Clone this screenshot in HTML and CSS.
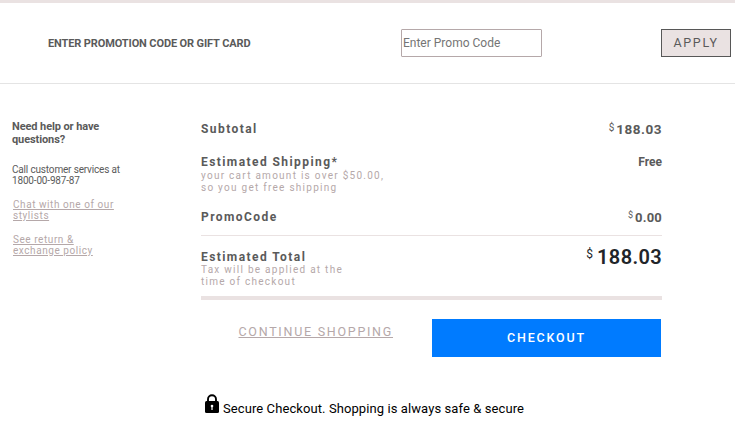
FILE: index.html
```html
<!DOCTYPE html>
<html lang="en">
<head>
<meta charset="utf-8">
<title>Cart summary</title>
<link rel="stylesheet" href="styles.css">
</head>
<body>
<div class="cart">
  <form class="promo">
    <label class="promo-label" for="code">ENTER PROMOTION CODE OR GIFT CARD</label>
    <input class="promo-input" id="code" type="text" placeholder="Enter Promo Code">
    <button class="apply" type="button">APPLY</button>
  </form>
  <div class="details">
    <aside class="help">
      <h2>Need help or have<br>questions?</h2>
      <p>Call customer services at<br>1800-00-987-87</p>
      <a href="#">Chat with one of our<br>stylists</a>
      <a href="#">See return &amp;<br>exchange policy</a>
    </aside>
    <main class="summary">
      <div class="row subtotal">
        <span class="name">Subtotal</span>
        <span class="price"><span class="cur">$</span><b>188.03</b></span>
      </div>
      <div class="row shipping">
        <div><span class="name">Estimated Shipping*</span>
          <p class="note">your cart amount is over $50.00,<br>so you get free shipping</p></div>
        <span class="free">Free</span>
      </div>
      <div class="row code">
        <span class="name">PromoCode</span>
        <span class="price small"><span class="cur">$</span><b>0.00</b></span>
      </div>
      <div class="row total">
        <div><span class="name">Estimated Total</span>
          <p class="note">Tax will be applied at the<br>time of checkout</p></div>
        <span class="price big"><span class="cur">$</span><b>188.03</b></span>
      </div>
      <div class="actions">
        <a class="continue" href="#">CONTINUE SHOPPING</a>
        <button class="checkout" type="button">CHECKOUT</button>
      </div>
      <div class="secure">
        <svg class="lock" viewBox="0 0 14 19" width="14" height="19">
          <path d="M3 8V5.2a4 4 0 0 1 8 0V8" fill="none" stroke="#000" stroke-width="1.9"/>
          <rect x="0" y="7" width="14" height="12" rx="1.5" fill="#000"/>
          <circle cx="7" cy="12" r="1.3" fill="#fff"/>
          <path d="M6.4 12h1.2v4H6.4z" fill="#fff"/>
        </svg>
        <span>Secure Checkout. Shopping is always safe &amp; secure</span>
      </div>
    </main>
  </div>
</div>
</body>
</html>
```
FILE: styles.css
```css
* { box-sizing: border-box; }
body { margin: 0; background: #fff; color: #5a5a5a; font-family: Roboto, sans-serif; }
h2, p { margin: 0; }
.cart { width: 735px; height: 441px; overflow: hidden; }
.promo { display: flex; height: 84px; padding: 26px 4px 0 48px; border-top: 3px solid #eae2e2; border-bottom: 1px solid #e4e4e4; }
.promo-label { width: 353px; font-size: 11px; line-height: 29px; font-weight: 700; letter-spacing: -0.12px; }
.promo-input { width: 141px; height: 28px; padding: 0 1px; border: 1px solid #b5a8a9; border-radius: 1px; font: 12px Roboto, sans-serif; }
.promo-input::placeholder { color: #757575; }
.apply { width: 70px; height: 28px; margin: 0 0 0 auto; padding: 0 0 2px; border: 1px solid #575757; background: #eae2e2; color: #5a5a5a; font: 12.5px Roboto, sans-serif; letter-spacing: 1.7px; }
.details { display: flex; }
.help { width: 201px; padding: 36px 0 0 12px; font-size: 10px; line-height: 11px; }
.help h2 { font-size: 11px; line-height: 13px; margin-bottom: 18px; letter-spacing: -0.1px; }
.help p { font-size: 10px; letter-spacing: -0.17px; }
.help a { display: block; margin: 13px 0 0 1px; color: #b5a8a9; letter-spacing: 0.56px; }
.summary { width: 461px; padding-top: 37px; }
.row { display: flex; justify-content: space-between; }
.name { display: block; font-size: 12px; line-height: 16px; font-weight: 700; letter-spacing: 1.43px; }
.note { color: #b5a8a9; font-size: 10px; line-height: 12px; letter-spacing: 1.26px; }
.price { display: flex; font-size: 13.5px; line-height: 16px; }
.price b { font-weight: 700; letter-spacing: 0.5px; }
.cur { margin-right: 2px; font-size: 10px; line-height: 13px; }
.price.small { font-size: 13px; line-height: 17px; }
.price.small b { letter-spacing: 0.2px; }
.price.small .cur { font-size: 9px; }
.price.big { margin-top: -2px; color: #212529; font-size: 20px; line-height: 21px; }
.price.big b { font-weight: 600; letter-spacing: 0.35px; }
.price.big .cur { margin-right: 4px; font-size: 12px; line-height: 14px; }
.subtotal { height: 33px; }
.shipping { height: 55px; }
.free { font-size: 12px; line-height: 16px; font-weight: 700; }
.code { height: 27px; border-bottom: 1px solid #eae2e2; }
.total { width: 461px; height: 64px; padding-top: 13px; border-bottom: 4px solid #eae2e2; }
.total .note { margin-top: -1px; }
.actions { display: flex; justify-content: space-between; padding: 19px 1px 0 37.5px; }
.continue { color: #b5a8a9; font-size: 12.5px; line-height: 26px; letter-spacing: 1.73px; }
.checkout { width: 229px; height: 38px; padding: 0 0 2px; border: 0; background: #007bff; color: #fff; font: 500 12.5px Roboto, sans-serif; letter-spacing: 1.8px; }
.secure { display: flex; margin: 37px 0 0 4px; color: #000; font-size: 13px; line-height: 29px; letter-spacing: 0.09px; }
.lock { margin-right: 4px; }
```
